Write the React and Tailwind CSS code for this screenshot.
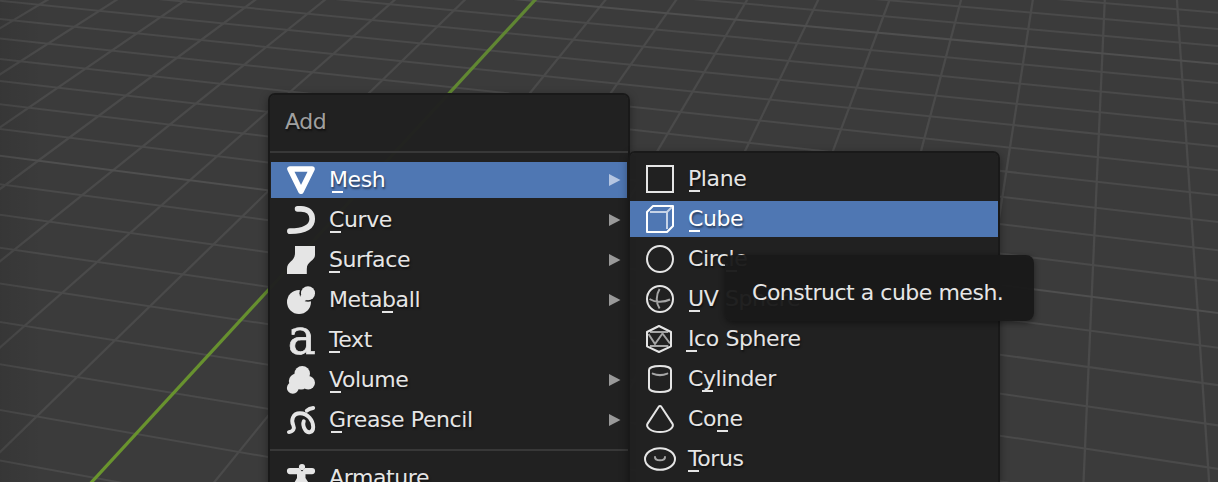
import React from "react";

/* Perspective of the viewport floor */
const ORIGIN = [350.2, 200.9];
const VANISH_Y = [1133.5, -651];
const VANISH_X = [-5550, -561.5];
const STEP_X = -0.013955;
const STEP_Y = -0.03068;

function project(i, j) {
  const a = i * STEP_X;
  const b = j * STEP_Y;
  const w = 1 + a + b;
  return [
    (ORIGIN[0] + a * VANISH_X[0] + b * VANISH_Y[0]) / w,
    (ORIGIN[1] + a * VANISH_X[1] + b * VANISH_Y[1]) / w,
  ];
}

function range(from, to) {
  return Array.from({ length: to - from + 1 }, (_, k) => from + k);
}

function GridLine({ from, to, color, width }) {
  const [x1, y1] = project(...from);
  const [x2, y2] = project(...to);
  return <line x1={x1} y1={y1} x2={x2} y2={y2} stroke={color} strokeWidth={width} />;
}

function Floor() {
  return (
    <svg className="absolute inset-0" width="1218" height="482" viewBox="0 0 1218 482">
      <defs>
        <linearGradient id="edge" x1="0" x2="1" y1="0" y2="0">
          <stop offset="0" stopColor="#000" stopOpacity="0.08" />
          <stop offset="1" stopColor="#000" stopOpacity="0" />
        </linearGradient>
        <linearGradient id="axis" gradientUnits="userSpaceOnUse" x1="0" y1="0" x2="0" y2="482">
          <stop offset="0" stopColor="#5f8533" />
          <stop offset="1" stopColor="#6a952d" />
        </linearGradient>
      </defs>
      {range(-16, 12).filter((i) => i !== 0).map((i) => (
        <GridLine key={"x" + i} from={[i, -20]} to={[i, 12]} color="#4a4a4a" width={2.3} />
      ))}
      {range(-17, 12).map((j) => (
        <GridLine key={"y" + j} from={[-20, j]} to={[14, j]} color={j % 10 === 0 ? "#4f4f4f" : "#4a4a4a"} width={2} />
      ))}
      <GridLine from={[0, -20]} to={[0, 12]} color="url(#axis)" width={3.2} />
      <rect width="42" height="482" fill="url(#edge)" />
    </svg>
  );
}

const DIM = { opacity: 0.68 };

const ICONS = {
  mesh: <path d="M4 4H26L15 26.2Z" fill="none" strokeWidth="5.6" strokeLinejoin="round" />,
  curve: <path d="M11.6 3.8H15C22 3.8 26.2 8 26.2 14C26.2 22.5 17 26 3.9 26.2" fill="none" strokeWidth="5.7" strokeLinecap="round" />,
  surface: <path d="M9 1H29V10C29 16 20.8 16 20.8 24V29H1V24C1 16 9 17 9 8Z" fill="currentColor" stroke="none" />,
  metaball: (
    <g stroke="none">
      <circle cx="13" cy="17" r="12" fill="currentColor" />
      <circle cx="22" cy="8.2" r="8.6" fill="#202020" />
      <circle cx="22" cy="8.2" r="7" fill="currentColor" />
      <path d="M15.2 9.2L13.8 12.5L13 17H18.5L19 15.8L21 14.9Z" fill="currentColor" />
    </g>
  ),
  text: (
    <text x="1.7" y="28.6" fontSize="49.5" strokeWidth="0.7" fill="currentColor" className="font-['DejaVu_Serif',serif]" textLength="28" lengthAdjust="spacingAndGlyphs">a</text>
  ),
  volume: (
    <g stroke="none" fill="currentColor">
      <circle cx="16.2" cy="8.8" r="7.8" />
      <circle cx="22.2" cy="17.8" r="6.8" />
      <circle cx="6.8" cy="22.9" r="5.9" />
      <circle cx="10" cy="16" r="7.2" />
      <circle cx="15" cy="18" r="6.6" />
    </g>
  ),
  grease: (
    <g fill="none" strokeWidth="3.9" strokeLinecap="round">
      <path d="M2.9 27.1C7.5 26.5 8.8 23.5 7.2 20C5 15.5 6.5 8.2 14 8.2C22 8.2 27.2 15.5 27.2 22C27.2 28 21.5 28.8 19 24.5C17 21 16.8 18.5 17.8 16.2" />
      <path d="M20.8 5.6C22.5 4 24.5 3.2 27.2 3" />
    </g>
  ),
  armature: (
    <g stroke="none" fill="currentColor">
      <circle cx="16" cy="4" r="3.1" />
      <path d="M4 5H13L16 8.5L19 5H26A3 3 0 0 1 26 11.2H19.5V15L24 22H7L11 15V11.2H4A3 3 0 0 1 4 5Z" />
    </g>
  ),
  plane: <rect x="2" y="2" width="26" height="26" fill="none" strokeWidth="2" />,
  cube: (
    <g fill="none" strokeWidth="2" strokeLinejoin="round">
      <path d="M5 8H22V25M22 8L28 2" style={DIM} />
      <path d="M2 8L8 2H28V22L22 28H2Z" />
    </g>
  ),
  circle: <circle cx="15" cy="15" r="13" fill="none" strokeWidth="2" />,
  uvsphere: (
    <g fill="none" strokeWidth="2">
      <circle cx="15" cy="15" r="13" />
      <path d="M14.6 5C10.8 11 10.8 19 14.6 24.5M4.5 15C10 18.6 19 18.6 25 15.5" style={DIM} />
    </g>
  ),
  icosphere: (
    <g fill="none" strokeWidth="2" strokeLinejoin="round">
      <path d="M5 8H23.3M5 22H23.3M3.5 10L10 20L17.5 9.5L25 19.5" style={DIM} />
      <path d="M14 2L26 8V22.3L14 28L2 22.3V8Z" />
    </g>
  ),
  cylinder: (
    <g fill="none" strokeWidth="2">
      <path d="M7.7 9.6C12 11.4 18 11.4 22.3 9.6" style={DIM} strokeLinecap="round" />
      <path d="M4 6V24C4 26.5 9 28 15 28S26 26.5 26 24V6C26 3.5 21 2 15 2S4 3.5 4 6Z" />
    </g>
  ),
  cone: <path d="M13.7 2.7C14.3 1.8 15.7 1.8 16.3 2.7L27.4 19.6C29.5 23.4 24 28 15 28S0.5 23.4 2.6 19.6Z" fill="none" strokeWidth="2" />,
  torus: (
    <g fill="none" strokeWidth="2">
      <path d="M10 13C10 17.4 20 17.4 20 13" style={DIM} strokeLinecap="round" />
      <ellipse cx="15" cy="15" rx="15" ry="10.8" />
    </g>
  ),
};

function Icon({ name }) {
  return (
    <svg className="size-[30px] shrink-0 overflow-visible" viewBox="0 0 30 30" stroke="currentColor">
      {ICONS[name]}
    </svg>
  );
}

function Item({ icon, text, mark, active, submenu, inset }) {
  return (
    <div className={`flex h-9 shrink-0 items-center ${inset} ${active ? "bg-[#4f77b3] text-white" : "text-[#e5e5e5]"}`}>
      <Icon name={icon} />
      <div className="relative ml-[13px] h-9 flex-1">
        <span className="block h-9 whitespace-pre text-[22px] leading-9 tracking-[-0.4px] [text-shadow:1px_2px_2px_rgba(0,0,0,0.5)]">{text}</span>
        <span className={`absolute top-[29px] h-[1.5px] w-[11px] bg-current ${mark}`} />
      </div>
      {submenu && (
        <svg className={`h-3 w-3 ${active ? "text-[#b5c6e2]" : "text-[#999]"}`} viewBox="0 0 12 12">
          <path d="M0 0V12L11.5 6Z" fill="currentColor" />
        </svg>
      )}
    </div>
  );
}

/* `mark` places the bar under the shortcut letter */
const ADD_ITEMS = [
  { icon: "mesh", text: "Mesh", mark: "left-[3px]", submenu: true, active: true },
  { icon: "curve", text: "Curve", mark: "left-px", submenu: true },
  { icon: "surface", text: "Surface", mark: "left-0", submenu: true },
  { icon: "metaball", text: "Metaball", mark: "left-[53px]", submenu: true },
  { icon: "text", text: "Text", mark: "left-0" },
  { icon: "volume", text: "Volume", mark: "left-px", submenu: true },
  { icon: "grease", text: "Grease Pencil", mark: "left-0.5", submenu: true },
];

const MESH_ITEMS = [
  { icon: "plane", text: "Plane", mark: "left-px" },
  { icon: "cube", text: "Cube", mark: "left-px", active: true },
  { icon: "circle", text: "Circle", mark: "left-[38px]" },
  { icon: "uvsphere", text: "UV Sphere", mark: "left-px" },
  { icon: "icosphere", text: "Ico Sphere", mark: "-left-0.5" },
  { icon: "cylinder", text: "Cylinder", mark: "left-3.5" },
  { icon: "cone", text: "Cone", mark: "left-[29px]" },
  { icon: "torus", text: "Torus", mark: "left-0" },
];

export default function App() {
  return (
    <div className="relative h-[482px] w-[1218px] overflow-hidden bg-[#3b3b3b] font-['DejaVu_Sans',sans-serif]">
      <Floor />

      <div className="absolute left-[268px] top-[93px] flex h-[420px] w-[362px] flex-col rounded-t-[7px] border-2 border-[#191919] bg-[#202020]/97 bg-clip-padding shadow-[0_3px_8px_rgba(0,0,0,0.4)]">
        <div className="flex h-14 items-center pb-1 pl-[15px] text-[22px] tracking-[-0.38px] text-[#a0a0a0] [text-shadow:1px_2px_2px_rgba(0,0,0,0.5)]">
          Add
        </div>
        <div className="h-0.5 shrink-0 bg-[#383838]" />
        <div className="mx-px mt-[9px] flex flex-col gap-1">
          {ADD_ITEMS.map((item) => (
            <Item key={item.text} {...item} inset="pl-[15px] pr-1.5" />
          ))}
        </div>
        <div className="mt-[11px] h-0.5 shrink-0 bg-[#383838]" />
        <div className="mx-px mt-[9px]">
          <Item icon="armature" text="Armature" mark="left-0.5" inset="pl-[15px] pr-1.5" />
        </div>
      </div>

      <div className="absolute left-[628px] top-[151px] flex h-[360px] w-[372px] flex-col gap-1 rounded-t-[7px] border-2 border-[#191919] bg-[#202020]/97 bg-clip-padding pt-2 shadow-[0_3px_8px_rgba(0,0,0,0.4)]">
        {MESH_ITEMS.map((item) => (
          <Item key={item.text} {...item} inset="pl-[15px]" />
        ))}
      </div>

      <div className="absolute left-[725px] top-[255px] flex h-[66px] w-[309px] items-center rounded-[8px] bg-[#191919]/96 pl-[27px] pt-2 text-[22px] tracking-[-0.48px] text-[#e6e6e6] shadow-[0_2px_6px_rgba(0,0,0,0.45)]">
        <span className="whitespace-pre">Construct a cube mesh.</span>
      </div>
    </div>
  );
}
